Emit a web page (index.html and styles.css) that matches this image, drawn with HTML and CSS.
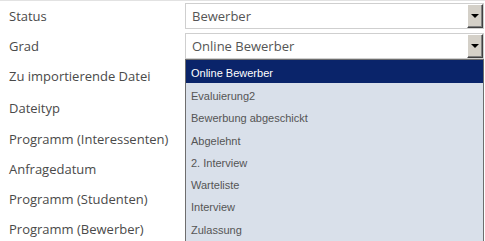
FILE: index.html
```html
<!DOCTYPE html>
<html lang="de">
<head>
<meta charset="UTF-8">
<title>Import</title>
<link rel="stylesheet" href="styles.css">
</head>
<body>

<div class="form">
  <div class="row">
    <label>Status</label>
    <div class="field">
      <div class="select">Bewerber<span class="arrow-btn"></span></div>
    </div>
  </div>

  <div class="row">
    <label>Grad</label>
    <div class="field">
      <div class="select">Online Bewerber<span class="arrow-btn"></span></div>
      <!-- offene Auswahlliste -->
      <ul class="dropdown">
        <li class="selected">Online Bewerber</li>
        <li>Evaluierung2</li>
        <li>Bewerbung abgeschickt</li>
        <li>Abgelehnt</li>
        <li>2. Interview</li>
        <li>Warteliste</li>
        <li>Interview</li>
        <li>Zulassung</li>
      </ul>
    </div>
  </div>

  <div class="row">
    <label>Zu importierende Datei</label>
    <div class="field"></div>
  </div>

  <div class="row row-tall">
    <label>Dateityp</label>
    <div class="field"></div>
  </div>

  <div class="row">
    <label>Programm (Interessenten)</label>
    <div class="field"></div>
  </div>

  <div class="row">
    <label>Anfragedatum</label>
    <div class="field"></div>
  </div>

  <div class="row">
    <label>Programm (Studenten)</label>
    <div class="field"></div>
  </div>

  <div class="row">
    <label>Programm (Bewerber)</label>
    <div class="field"></div>
  </div>
</div>

</body>
</html>
```

FILE: styles.css
```css
body {
    margin: 0;
    padding: 0;
    background-color: #ffffff;
    font-family: "Open Sans", "Liberation Sans", Arial, sans-serif;
    overflow: hidden;
}

.form {
    border-top: 1px solid #e2e2e2;
}

.row {
    display: grid;
    grid-template-columns: 185px 1fr;
    align-items: center;
    height: 30px;
    padding-right: 1px;
}

.row-tall {
    height: 33px;
}

label {
    padding-left: 9px;
    font-size: 13px;
    color: #4a4a4a;
}

.field {
    position: relative;
    height: 26px;
}

.select {
    position: relative;
    box-sizing: border-box;
    height: 26px;
    padding-left: 6px;
    border: 1px solid #cfcfcf;
    background-color: #ffffff;
    font-size: 13px;
    line-height: 24px;
    color: #555;
}

/* alter Windows-Knopf */
.arrow-btn {
    position: absolute;
    top: 0;
    right: 0;
    bottom: 0;
    width: 16px;
    box-sizing: border-box;
    background-color: #d4d0c8;
    border-top: 1px solid #ffffff;
    border-left: 1px solid #ffffff;
    border-right: 1px solid #404040;
    border-bottom: 1px solid #404040;
    box-shadow: inset -1px -1px 0 #808080;
}

.arrow-btn::after {
    content: "";
    position: absolute;
    top: 9px;
    left: 3px;
    border-left: 4px solid transparent;
    border-right: 4px solid transparent;
    border-top: 4px solid #000;
}

.dropdown {
    position: absolute;
    top: 100%;
    left: 0;
    right: 0;
    height: 200px;
    margin: 0;
    padding: 0;
    list-style: none;
    border: 1px solid #6e6e6e;
    border-bottom: none;
    background-color: #d9e0ea;
    font-family: "Liberation Sans", Arial, sans-serif;
    font-size: 11px;
    color: #555;
    z-index: 10;
}

.dropdown li {
    box-sizing: border-box;
    height: 22.3px;
    padding-top: 2px;
    line-height: 22px;
    padding-left: 5px;
}

.dropdown li.selected {
    height: 23px;
    background-color: #0a246a;
    color: #ffffff;
}
```
